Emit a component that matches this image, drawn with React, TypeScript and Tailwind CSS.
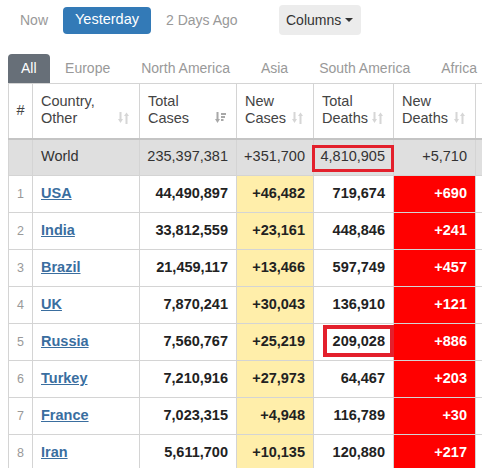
import React from 'react';

type Row = {
  n: number;
  country: string;
  total: string;
  newCases: string;
  deaths: string;
  newDeaths: string;
  mark?: boolean;
};

const rows: Row[] = [
  { n: 1, country: 'USA', total: '44,490,897', newCases: '+46,482', deaths: '719,674', newDeaths: '+690' },
  { n: 2, country: 'India', total: '33,812,559', newCases: '+23,161', deaths: '448,846', newDeaths: '+241' },
  { n: 3, country: 'Brazil', total: '21,459,117', newCases: '+13,466', deaths: '597,749', newDeaths: '+457' },
  { n: 4, country: 'UK', total: '7,870,241', newCases: '+30,043', deaths: '136,910', newDeaths: '+121' },
  { n: 5, country: 'Russia', total: '7,560,767', newCases: '+25,219', deaths: '209,028', newDeaths: '+886', mark: true },
  { n: 6, country: 'Turkey', total: '7,210,916', newCases: '+27,973', deaths: '64,467', newDeaths: '+203' },
  { n: 7, country: 'France', total: '7,023,315', newCases: '+4,948', deaths: '116,789', newDeaths: '+30' },
  { n: 8, country: 'Iran', total: '5,611,700', newCases: '+10,135', deaths: '120,880', newDeaths: '+217' },
];

function SortIcon({ active }: { active?: boolean }) {
  if (active) {
    return (
      <svg width="11" height="12" viewBox="0 0 11 12" className="absolute right-[10px] bottom-[14px]">
        <rect x="1.5" y="0" width="2" height="8" fill="#a8a8a8" />
        <polygon points="0,7 5,7 2.5,11" fill="#a8a8a8" />
        <rect x="6" y="1" width="5" height="2" fill="#a8a8a8" />
        <rect x="6" y="4" width="4" height="2" fill="#a8a8a8" />
        <rect x="6" y="7" width="2.5" height="2" fill="#a8a8a8" />
      </svg>
    );
  }
  return (
    <svg width="11" height="12" viewBox="0 0 11 12" className="absolute right-[10px] bottom-[14px]">
      <rect x="1.5" y="0" width="2" height="8" fill="#d6d6d6" />
      <polygon points="0,7 5,7 2.5,11" fill="#d6d6d6" />
      <polygon points="6,4 11,4 8.5,0.5" fill="#d6d6d6" />
      <rect x="7.5" y="3" width="2" height="9" fill="#d6d6d6" />
    </svg>
  );
}

const tabs = ['All', 'Europe', 'North America', 'Asia', 'South America', 'Africa'];
const heads = ['Country,|Other', 'Total|Cases', 'New|Cases', 'Total|Deaths', 'New|Deaths'];

export default function App() {
  return (
    <div className="w-[482px] h-[468px] overflow-hidden bg-white font-['Liberation_Sans',Arial,sans-serif] text-[14.5px] text-[#333]">
      <div className="flex items-center h-[40px] pl-[20px]">
        <span className="text-[#999] text-[14px]">Now</span>
        <span className="ml-[15px] h-[27px] w-[88px] flex items-center justify-center rounded-[4px] bg-[#337ab7] text-white">
          Yesterday
        </span>
        <span className="ml-[15px] text-[#999] text-[14px]">2 Days Ago</span>
        <span className="ml-[41px] h-[30px] w-[82px] flex items-center justify-center gap-[4px] rounded-[4px] bg-[#ececec] text-[#333] text-[14px]">
          Columns
          <svg width="8" height="4" viewBox="0 0 8 4">
            <polygon points="0,0 8,0 4,4" fill="#333" />
          </svg>
        </span>
      </div>

      <div className="flex items-end h-[43px] pl-[8px] whitespace-nowrap text-[14px]">
        {tabs.map((t, i) =>
          i === 0 ? (
            <span key={t} className="h-[29px] px-[13px] flex items-center rounded-t-[4px] bg-[#676f78] text-white">
              {t}
            </span>
          ) : (
            <span key={t} className="h-[29px] px-[15.5px] flex items-center text-[#999]">
              {t}
            </span>
          )
        )}
      </div>

      <table className="ml-[8px] border-collapse table-fixed w-[520px]">
        <colgroup>
          <col className="w-[24px]" />
          <col className="w-[107px]" />
          <col className="w-[97px]" />
          <col className="w-[77px]" />
          <col className="w-[80px]" />
          <col className="w-[82px]" />
          <col className="w-[53px]" />
        </colgroup>
        <thead>
          <tr className="h-[55px] border-b-2 border-[#c4c4c4]">
            <th className="border border-[#d4d4d4] font-normal text-[#444] text-center">#</th>
            {heads.map((h, i) => {
              const [a, b] = h.split('|');
              return (
                <th
                  key={h}
                  className="relative border border-[#d4d4d4] border-b-2 border-b-[#c4c4c4] font-normal text-left align-top pt-[9px] pl-[8px] leading-[17px] text-[#444]"
                >
                  {a}
                  <br />
                  {b}
                  <SortIcon active={i === 1} />
                </th>
              );
            })}
            <th className="border border-[#d4d4d4] border-b-2 border-b-[#c4c4c4]" />
          </tr>
        </thead>
        <tbody>
          <tr className="h-[37px] bg-[#dfdfdf]">
            <td className="border border-[#d4d4d4]" />
            <td className="border border-[#d4d4d4] pl-[8px]">World</td>
            <td className="border border-[#d4d4d4] text-right pr-[8px]">235,397,381</td>
            <td className="border border-[#d4d4d4] text-right pr-[8px]">+351,700</td>
            <td className="relative border border-[#d4d4d4] text-right pr-[8px]">
              4,810,905
              <div className="absolute left-[-2px] right-[-1px] top-[5px] bottom-[3px] border-[3px] border-[#e3202c]" />
            </td>
            <td className="border border-[#d4d4d4] text-right pr-[8px]">+5,710</td>
            <td className="border border-[#d4d4d4]" />
          </tr>
          {rows.map((r) => (
            <tr key={r.n} className="h-[37px]">
              <td className="border border-[#d4d4d4] text-center text-[12.5px] text-[#999]">{r.n}</td>
              <td className="border border-[#d4d4d4] pl-[8px]">
                <span className="font-bold underline text-[#3a6e9f]">{r.country}</span>
              </td>
              <td className="border border-[#d4d4d4] text-right pr-[8px] font-bold text-[#222]">{r.total}</td>
              <td className="border border-[#d4d4d4] bg-[#ffeeaa] text-right pr-[8px] font-bold text-[#222]">{r.newCases}</td>
              <td className="relative border border-[#d4d4d4] text-right pr-[8px] font-bold text-[#222]">
                {r.deaths}
                {r.mark && (
                  <div className="absolute left-[9px] right-[-1px] top-[1px] bottom-[3px] border-[4px] border-[#e3202c]" />
                )}
              </td>
              <td className="border border-[#d4d4d4] bg-[#ff0000] text-right pr-[8px] font-bold text-white">{r.newDeaths}</td>
              <td className="border border-[#d4d4d4]" />
            </tr>
          ))}
        </tbody>
      </table>
    </div>
  );
}
